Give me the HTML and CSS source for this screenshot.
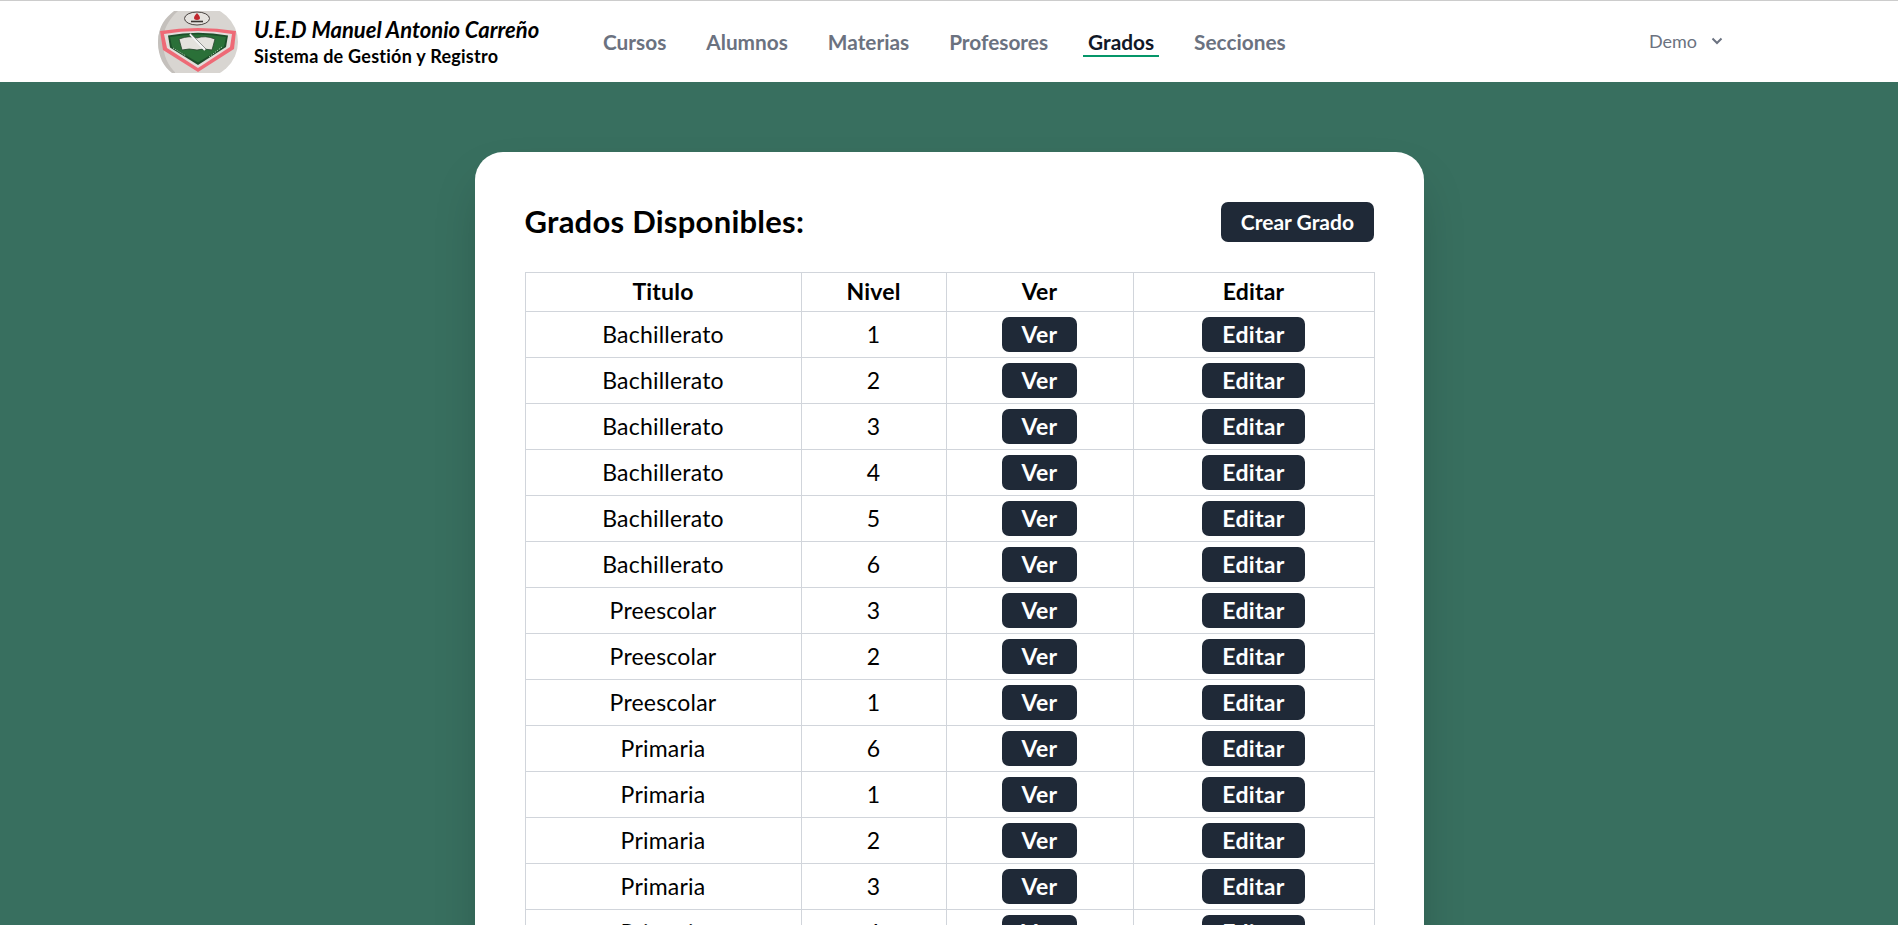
FILE: index.html
```html
<!DOCTYPE html>
<html lang="es">
<head>
<meta charset="utf-8">
<title>Grados</title>
<link rel="stylesheet" href="styles.css">
</head>
<body>
<nav class="nav">
  <div class="brand">
    <svg class="logo" viewBox="0 0 80 62" aria-hidden="true">
      <defs>
        <clipPath id="c"><rect x="0" y="0" width="80" height="62"/></clipPath>
        <filter id="soft" x="-5%" y="-5%" width="110%" height="110%"><feGaussianBlur stdDeviation=".5"/></filter>
      </defs>
      <g clip-path="url(#c)"><g filter="url(#soft)">
        <ellipse cx="40" cy="31" rx="40" ry="37" fill="#d8d5d1"/>
        <path d="M0 31C0 15 8 6 16 0h4C11 8 5 18 5 31s5 24 13 31h-4C6 56 0 46 0 31z" fill="#c4c0bc"/>
        <ellipse cx="39" cy="7.500" rx="12.500" ry="6.500" fill="#e6e3df" stroke="#4a4442" stroke-width="1"/>
        <path d="M39 2c1.500 2 3 3 3 5 0 1-1 2-3 2s-3-1-3-2c0-2 1.500-3 3-5z" fill="#c0272d"/>
        <path d="M33 10.500h12" stroke="#3b3533" stroke-width="1.600"/>
        <path d="M2 20Q40 14 78 20L76 38 40 61 5 39z" fill="#ee6a76"/>
        <path d="M6 23Q40 17 74 23L72 36 40 57 9 37z" fill="#e2dedb"/>
        <path d="M10 24.500Q40 19 70 24.500L68 36 40 54 12 36.500z" fill="#1d4f2a"/>
        <path d="M12 26Q40 21 68 26L66 35.500 40 51.500 14 36z" fill="#2b6f38"/>
        <path d="M21 28Q32 24 39 27Q47 24 57 28L54 39Q45 37 39 39Q31 37 24 39z" fill="#e4e2dd" stroke="#27452f" stroke-width=".8"/>
        <path d="M32 23 47 39" stroke="#f4f4f4" stroke-width="2"/>
        <path d="M33 23 48 38" stroke="#555b57" stroke-width=".6"/>
        <path d="M15 37 28 45M51 46 64 36" stroke="#9cc3a2" stroke-width="1" stroke-dasharray="1.500 1"/>
      </g></g>
    </svg>
    <div class="brand-text">
      <span class="brand-title">U.E.D Manuel Antonio Carreño</span>
      <span class="brand-sub">Sistema de Gestión y Registro</span>
    </div>
  </div>
  <ul class="menu">
    <li><a class="link">Cursos</a></li>
    <li><a class="link">Alumnos</a></li>
    <li><a class="link">Materias</a></li>
    <li><a class="link">Profesores</a></li>
    <li><a class="link active">Grados</a></li>
    <li><a class="link">Secciones</a></li>
  </ul>
  <div class="user">
    <span>Demo</span>
    <svg class="chev" viewBox="0 0 12 8" aria-hidden="true"><path d="M1.500 1.500 6 6l4.500-4.500" fill="none" stroke="#6b7280" stroke-width="2"/></svg>
  </div>
</nav>
<main class="main">
  <section class="card">
    <header class="card-head">
      <h1 class="title">Grados Disponibles:</h1>
      <a class="btn btn-lg">Crear Grado</a>
    </header>
    <table class="grid">
      <colgroup><col class="c1"><col class="c2"><col class="c3"><col class="c4"></colgroup>
      <thead><tr><th>Titulo</th><th>Nivel</th><th>Ver</th><th>Editar</th></tr></thead>
      <tbody>
        <tr><td>Bachillerato</td><td>1</td><td><a class="btn">Ver</a></td><td><a class="btn">Editar</a></td></tr>
        <tr><td>Bachillerato</td><td>2</td><td><a class="btn">Ver</a></td><td><a class="btn">Editar</a></td></tr>
        <tr><td>Bachillerato</td><td>3</td><td><a class="btn">Ver</a></td><td><a class="btn">Editar</a></td></tr>
        <tr><td>Bachillerato</td><td>4</td><td><a class="btn">Ver</a></td><td><a class="btn">Editar</a></td></tr>
        <tr><td>Bachillerato</td><td>5</td><td><a class="btn">Ver</a></td><td><a class="btn">Editar</a></td></tr>
        <tr><td>Bachillerato</td><td>6</td><td><a class="btn">Ver</a></td><td><a class="btn">Editar</a></td></tr>
        <tr><td>Preescolar</td><td>3</td><td><a class="btn">Ver</a></td><td><a class="btn">Editar</a></td></tr>
        <tr><td>Preescolar</td><td>2</td><td><a class="btn">Ver</a></td><td><a class="btn">Editar</a></td></tr>
        <tr><td>Preescolar</td><td>1</td><td><a class="btn">Ver</a></td><td><a class="btn">Editar</a></td></tr>
        <tr><td>Primaria</td><td>6</td><td><a class="btn">Ver</a></td><td><a class="btn">Editar</a></td></tr>
        <tr><td>Primaria</td><td>1</td><td><a class="btn">Ver</a></td><td><a class="btn">Editar</a></td></tr>
        <tr><td>Primaria</td><td>2</td><td><a class="btn">Ver</a></td><td><a class="btn">Editar</a></td></tr>
        <tr><td>Primaria</td><td>3</td><td><a class="btn">Ver</a></td><td><a class="btn">Editar</a></td></tr>
        <tr><td>Primaria</td><td>4</td><td><a class="btn">Ver</a></td><td><a class="btn">Editar</a></td></tr>
      </tbody>
    </table>
  </section>
</main>
</body>
</html>
```

FILE: styles.css
```css
* { box-sizing: border-box; }
html, body { margin: 0; height: 100%; overflow: hidden; }
body { background: #386f5f; font-family: Lato, "Noto Sans", sans-serif; color: #000; }

.nav { display: flex; align-items: center; height: 82px; background: #fff; border-top: 1px solid #ccc; padding: 0 175px 0 158px; }
.brand { display: flex; align-items: center; width: 440px; flex: none; }
.logo { width: 80px; height: 62px; flex: none; margin-right: 16px; }
.brand-text { display: flex; flex-direction: column; gap: 2px; }
.brand-title { font-size: 22px; font-weight: 700; font-style: italic; line-height: 26px; }
.brand-sub { font-size: 18px; font-weight: 700; line-height: 22px; letter-spacing: .25px; }

.menu { display: flex; list-style: none; margin: 0; padding: 0; gap: 30px; flex: 1; }
.link { display: block; padding: 2px 5px 0; font-size: 20.8px; font-weight: 700; line-height: 26px; color: #6b7280; border-bottom: 2px solid transparent; }
.link.active { color: #111827; border-bottom-color: #059669; }

.user { display: flex; align-items: center; gap: 14px; font-size: 18px; line-height: 22px; padding-bottom: 2px; color: #6b7280; }
.chev { width: 12px; height: 8px; }

.main { display: flex; justify-content: center; padding-top: 70px; }
.card { width: 949px; flex: none; background: #fff; border-radius: 28px; padding: 50px; box-shadow: 0 25px 50px -12px rgba(0,0,0,.25); }
.card-head { display: flex; justify-content: space-between; align-items: center; margin-bottom: 30px; }
.title { margin: 0 0 2px; font-size: 31px; font-weight: 700; line-height: 38px; letter-spacing: .25px; }

.btn { display: inline-block; background: #1f2937; color: #fff; border-radius: 7px; padding: 0 20px; font-size: 23px; font-weight: 700; line-height: 34px; height: 35px; vertical-align: middle; letter-spacing: .3px; }
.btn-lg { padding: 0 19.5px; font-size: 21px; line-height: 39px; height: 40px; border-radius: 7px; letter-spacing: 0; }

.grid { width: 849px; table-layout: fixed; border-collapse: collapse; font-size: 23px; text-align: center; }
.c1 { width: 276px; } .c2 { width: 145px; } .c3 { width: 187px; } .c4 { width: 241px; }
.grid th, .grid td { border: 1px solid #d1d5db; padding: 0; }
.grid th { height: 39px; font-weight: 700; letter-spacing: .2px; padding-bottom: 3px; }
.grid td { height: 46px; letter-spacing: .2px; }
.grid td:nth-child(-n+2) { padding-bottom: 2px; }
```
